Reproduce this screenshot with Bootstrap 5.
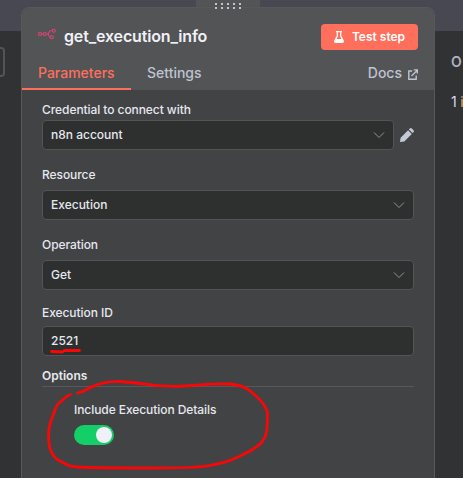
<!DOCTYPE html>
<html lang="en" data-bs-theme="dark">
<head>
<meta charset="utf-8">
<title>get_execution_info</title>
<link href="https://cdn.jsdelivr.net/npm/bootstrap@5.3.0/dist/css/bootstrap.min.css" rel="stylesheet">
<style>
body{font-family:Inter,sans-serif;font-size:12px;line-height:16px;font-weight:500;color:#e6e8ef;height:478px;background:linear-gradient(#484853 31px,#313234 31px)}
.side-l{width:21px;padding-top:47px}
.side-stub{width:5px;height:30px;border:2px solid #525456;border-left:0;border-radius:0 4px 4px 0}
.side-r{width:28px;padding:53px 0 0 16px;white-space:nowrap}
.out-title{font-size:14px;font-weight:600;color:#adb1bf;line-height:18px;margin-bottom:22px}
.out-items{font-size:14px;line-height:18px;font-weight:400;color:#d5dcec;letter-spacing:-.2px}
.out-items span{color:#e0b070}
.panel-col{width:414px}
.handle{width:64px;height:7px;margin-left:175px;background:#525456}
.handle svg{left:19px;top:3px}
.ndv{height:471px;background:#424345;border:1px solid #56585a;border-bottom:0;border-radius:8px 8px 0 0}
.ndv-head{background:#525456;height:82px;border-radius:7px 7px 0 0}
.title-row{height:57px;padding:0 16px 1px 16px}
.node-title{font-size:16px;font-weight:600;color:#f0f1f6;line-height:20px;letter-spacing:-.15px}
.test-btn{width:97px;height:26px;background:#ff6f5c;color:#fff;font-size:12px;font-weight:600;border-radius:4px;margin-top:1px;padding:0}
.tabs-row{height:25px;font-size:14px;line-height:16px;color:#bfc3d2}
.tab-on{width:109px;height:25px;color:#ff6f5c;border-bottom:2px solid #ff6f5c;padding-left:16px}
.docs{padding-right:15px}
.docs svg{margin:4px 1px 0 6px}
.form-area{padding:12px 20px 0 20px}
.lbl{height:16px;letter-spacing:-.07px}
.field{height:30px;background:#2e302f;border:1px solid #525456;border-radius:4px;padding:0 8px 0 8px}
.f-cred{width:352px}
.f-std{margin-top:7px}
.f-text{margin-top:5px}
.cred-row{margin-top:2px}
.gap-a{margin-top:17px}
.gap-b{margin-top:15px}
.opt-line{border-bottom:1px solid #56585a;height:19px;margin-top:12px;font-weight:600}
.toggle{width:40px;height:20px;border-radius:10px;background:#14ce67;padding:2px;margin-top:7px}
.knob{width:16px;height:16px;background:#f0f1f8}
.ink{left:0;top:0;pointer-events:none}
</style>
</head>
<body class="m-0 overflow-hidden position-relative">
<div class="d-flex h-100">
  <div class="side-l flex-shrink-0"><div class="side-stub"></div></div>
  <main class="panel-col flex-shrink-0">
    <div class="handle position-relative"><svg class="position-absolute overflow-visible" width="28" height="7" fill="#bfc3d2"><path d="M0 0h2v2H0zM6 0h2v2H6zM12 0h2v2h-2zM18 0h2v2h-2zM24 0h2v2h-2zM0 4h2v2H0zM6 4h2v2H6zM12 4h2v2h-2zM18 4h2v2h-2zM24 4h2v2h-2z"/></svg></div>
    <div class="ndv">
      <header class="ndv-head">
        <div class="title-row d-flex align-items-center">
          <svg class="mb-1" width="18" height="12" fill="none" stroke="#dc4570" stroke-width="1.1"><circle cx="2" cy="6" r="1.5"/><circle cx="6.8" cy="6" r="1.5"/><circle cx="15.8" cy="2.8" r="1.5"/><circle cx="13.8" cy="9.2" r="1.5"/><path d="M3.500 6h1.800M8.300 6h1.200q1 0 1.300-1.200l.3-.8q.3-1.200 1.600-1.200h1.600M9.500 6q1 0 1.200 1.200.3 2 1.600 2"/></svg>
          <span class="node-title ms-2">get_execution_info</span>
          <button class="btn test-btn ms-auto d-flex align-items-center justify-content-center border-0"><svg class="me-2" width="10" height="12" viewBox="0 0 10 12" fill="#fff"><path fill-rule="evenodd" d="M2 0h6v1.200h-.7v3.500l2.600 5q.4 2.100-1.300 2.300H1.400Q-.3 11.800.1 9.700l2.600-5V1.200H2zM4 1.200v3.900L2.600 8h4.800L6 5.100V1.200z"/></svg>Test step</button>
        </div>
        <nav class="tabs-row d-flex">
          <div class="tab-on">Parameters</div>
          <div class="ms-3">Settings</div>
          <div class="docs ms-auto d-flex">Docs<svg width="10" height="11" viewBox="0 0 10 11" fill="none" stroke="#bfc3d2" stroke-width="1.4"><path d="M4.200 2H.8v8.200h7.400V6.600M3.500 7L9 1.500M5.800.9h3.500v3.500"/></svg></div>
        </nav>
      </header>
      <section class="form-area">
        <div class="lbl">Credential to connect with</div>
        <div class="cred-row d-flex align-items-center">
          <div class="field f-cred d-flex align-items-center justify-content-between">n8n account<svg width="12" height="8" fill="none" stroke="#8f9196"><path d="M1 1.500l5 5 5-5"/></svg></div>
          <svg class="ms-auto" width="14" height="14" viewBox="0 0 14 14" fill="#c4cbd8"><path d="M0 14l.6-4.300 7.500-7.500 3.700 3.700-7.500 7.500zM8.900 1.400L9.800.5q1-.9 2 0l1.700 1.700q.9 1 0 2l-.9.9z"/></svg>
        </div>
        <div class="lbl gap-a">Resource</div>
        <div class="field f-std d-flex align-items-center justify-content-between">Execution<svg width="12" height="8" fill="none" stroke="#8f9196"><path d="M1 1.500l5 5 5-5"/></svg></div>
        <div class="lbl gap-a">Operation</div>
        <div class="field f-std d-flex align-items-center justify-content-between">Get<svg width="12" height="8" fill="none" stroke="#8f9196"><path d="M1 1.500l5 5 5-5"/></svg></div>
        <div class="lbl gap-b">Execution ID</div>
        <div class="field f-text d-flex align-items-center">2521</div>
        <div class="opt-line">Options</div>
        <div class="ps-4 ms-2">
          <div class="lbl gap-b">Include Execution Details</div>
          <div class="toggle d-flex justify-content-end"><div class="knob rounded-circle"></div></div>
        </div>
      </section>
    </div>
  </main>
  <aside class="side-r flex-shrink-0 overflow-hidden"><div class="out-title">O</div><div class="out-items">1 <span>i</span></div></aside>
</div>
<svg class="ink position-absolute" width="463" height="478" fill="none" stroke="#fb0606" stroke-width="2.800" stroke-linecap="round" stroke-linejoin="round"><path d="M51.500 351.500l11 .5 2-1.500h15"/><path d="M70.500 394.500C65 396 65 399 59 403C55 406 55 412 50.500 422C48 430 48 438 49.500 447C52 454 54 458 60 461C67 465 70 466.500 77 467C97 468 125 468 156 468C190 468 207 467 214 464.500C224 463 230 461 238 457C248 452 256 449 262 442C268 435 267 427 267.500 413C266 406 263 402 256 396C247 387 240 385 230 384C213 383 200 385 184 386C160 388 146 383 120 381.500C102 381 94 386 88 388.500L83 391.500L77.500 393"/></svg>
<script src="https://cdn.jsdelivr.net/npm/bootstrap@5.3.0/dist/js/bootstrap.bundle.min.js"></script>
</body>
</html>
